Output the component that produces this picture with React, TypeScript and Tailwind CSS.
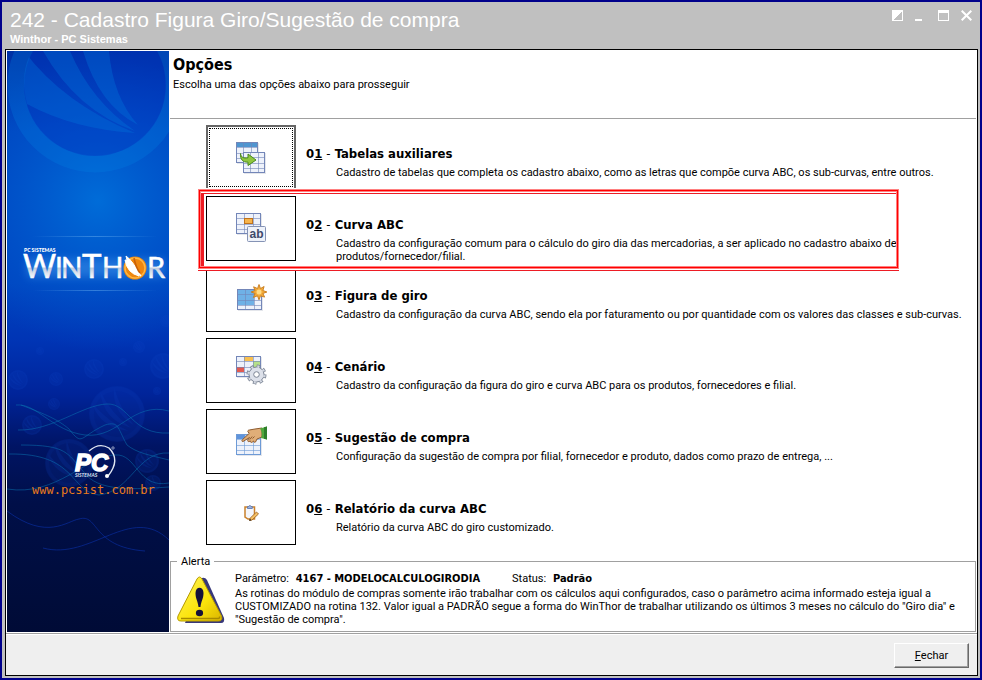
import React from 'react';

interface Option {
  code: string;
  title: string;
  text: string;
  icon: React.ReactNode;
}

interface GridProps {
  x: number;
  y: number;
  w: number;
  h: number;
  stroke?: string;
  children?: React.ReactNode;
}

// small table glyph: frame, 3 columns and 4 rows
function Grid({ x, y, w, h, stroke = '#7386b8', children }: GridProps) {
  const cols = [Math.round(w / 3), Math.round((w * 2) / 3)];
  const rows = [Math.round(h / 4), Math.round(h / 2), Math.round((h * 3) / 4)];
  return (
    <g transform={`translate(${x} ${y})`} shapeRendering="crispEdges">
      <rect x="1" y="1" width={w} height={h} fill="#c9cdd8" opacity="0.5" />
      <rect width={w} height={h} fill="#eef2fb" />
      {children}
      {cols.map((c) => <rect key={c} x={c} width="1" height={h} fill={stroke} opacity="0.6" />)}
      {rows.map((r) => <rect key={r} y={r} width={w} height="1" fill={stroke} opacity="0.6" />)}
      <rect x="0.5" y="0.5" width={w - 1} height={h - 1} fill="none" stroke={stroke} />
    </g>
  );
}

const IconTables = () => (
  <svg width="32" height="32" viewBox="0 0 32 32" aria-hidden="true">
    <Grid x={1} y={0} w={22} h={21}>
      <rect width="22" height="5" fill="#4f95d0" />
    </Grid>
    <Grid x={8} y={10} w={22} h={21} />
    <path d="M5.500 11.500c.5 4 3 5 7.500 4.300V12l8 6-8 5.500v-3.400C8 20.500 5 17.500 5.500 11.500z" fill="#8fc63f" stroke="#4b8a1d" />
  </svg>
);

const IconText = () => (
  <svg width="32" height="32" viewBox="0 0 32 32" aria-hidden="true">
    <Grid x={1} y={0} w={25} h={21} />
    <rect x="9.500" y="5.500" width="8" height="5" fill="#f6b44c" stroke="#c0731c" />
    <rect x="12.500" y="13.500" width="18" height="15" rx="1" fill="#eef2fa" stroke="#8593b5" />
    <text x="21.500" y="25" textAnchor="middle" fontFamily="Liberation Sans, sans-serif" fontWeight="700" fontSize="12" fill="#3f4a6b">ab</text>
  </svg>
);

const IconNew = () => (
  <svg width="32" height="32" viewBox="0 0 32 32" aria-hidden="true">
    <Grid x={2} y={5} w={25} h={21}>
      <rect width="17" height="16" fill="#6fb1e6" />
    </Grid>
    <path d="M24 .5l1.500 4 3.600-2-1.200 4 4 1.500-4 1.500 1.700 3.600-4.100-1.300-1.500 4-1.500-4-4.100 1.600 1.700-3.900-3.900-1.500 3.900-1.500-1.500-3.700 3.900 1.700z" fill="#f3ab3c" stroke="#c67a1b" strokeWidth=".9" />
    <circle cx="24" cy="8" r="2.500" fill="#ffdb84" />
  </svg>
);

const IconGear = () => (
  <svg width="32" height="32" viewBox="0 0 32 32" aria-hidden="true">
    <Grid x={1} y={1} w={25} h={21}>
      <rect x="8" y="0" width="9" height="5" fill="#f8c050" />
      <rect x="0" y="11" width="8" height="5" fill="#e25a50" />
      <rect x="17" y="5" width="8" height="6" fill="#b5e08a" />
    </Grid>
    <circle cx="21.500" cy="19.500" r="8" fill="none" stroke="#7b8494" strokeWidth="4" strokeDasharray="3.300 2.983" />
    <circle cx="21.500" cy="19.500" r="7.500" fill="#dde1ea" stroke="#7b8494" />
    <circle cx="21.500" cy="19.500" r="8" fill="none" stroke="#d3d8e2" strokeWidth="2.400" strokeDasharray="2 4.283" strokeDashoffset="-.6" />
    <circle cx="21.500" cy="19.500" r="2.800" fill="#fff" stroke="#7b8494" />
  </svg>
);

const IconHand = () => (
  <svg width="32" height="32" viewBox="0 0 32 32" aria-hidden="true">
    <Grid x={1} y={8} w={25} h={21} stroke="#6d9ad6">
      <rect width="25" height="5" fill="#a9c9f0" />
      <rect width="9" height="5" fill="#5f94dc" />
    </Grid>
    <path d="M8 15.500c-1 .4-1.500-1-.7-1.700l7-6.500L13 6c-.6-1 .2-2 1.300-2L20 3l7-1v9l-5 2-1.500 3c-1 .8-2 0-1.800-1l-1.700 1.300c-1 .4-1.800-.3-1.500-1.300l-1.800.6c-1 0-1.300-1-.7-1.900l1.500-2.200z" fill="#e0ae78" stroke="#8f5c30" />
    <path d="M17.500 12.500l2-2M14.800 13.500l2.400-3" stroke="#8f5c30" fill="none" />
    <path d="M25 2.500L32 .5v13l-6-1.500c1.500-3 1-6-1-9.500z" fill="#4fa83d" />
    <path d="M29 1.300l3-.8v13l-3-.7z" fill="#2e7f2b" />
  </svg>
);

const IconClipboard = () => (
  <svg width="16" height="16" viewBox="0 0 16 16" aria-hidden="true">
    <path d="M2 2h9.500v12H5L2 12z" fill="#f4f6fb" stroke="#c9812c" strokeWidth="1.500" />
    <path d="M4.500 3.500V1.500h1.200c.4-1.300 2-1.300 2.400 0h1.200v2z" fill="#9eb4df" stroke="#5672ad" strokeWidth=".8" />
    <path d="M13.500 7l2 2-6.500 6-2.500.7.6-2.500z" fill="#f6c063" stroke="#94591b" strokeWidth=".8" />
    <path d="M6.300 15.800l.6-2 1.500 1.500z" fill="#222" />
  </svg>
);

const IconWarning = () => (
  <svg width="48" height="48" viewBox="0 0 48 48" className="shrink-0" role="img" aria-label="Alerta">
    <defs>
      <linearGradient id="warn" x1="0" y1="0" x2="1" y2="1">
        <stop offset="0" stopColor="#fff45a" />
        <stop offset=".6" stopColor="#fbe30a" />
        <stop offset="1" stopColor="#d9b400" />
      </linearGradient>
    </defs>
    <path d="M25 3q3-1 5 2l17 38q1 5-3 5H8z" fill="#38387a" />
    <path d="M20 4q2.500-4 5 0l19.500 37q1.500 5-3 5H4q-4.500 0-3-5z" fill="url(#warn)" stroke="#b59a00" />
    <path d="M4 43.500h37q2 0 1.500-2" stroke="#a88a00" strokeWidth="1.500" fill="none" />
    <path d="M18.500 18c0-7 8-7 8 0 0 6-2.500 8-3 14h-2c-.5-6-3-8-3-14z" fill="#15103a" />
    <ellipse cx="22.500" cy="38" rx="3.600" ry="3.200" fill="#15103a" />
  </svg>
);

// round ball with three blades, repeated over the side panel
const Ball = ({ x, y, r }: { x: number; y: number; r: number }) => (
  <g transform={`translate(${x} ${y}) scale(${r / 10})`} fill="#1048c8" opacity="0.26">
    <circle r="10" fillOpacity="0.5" />
    <path d="M-9-4Q-3 3 4 6-6 5-9-4zM-6-8Q-2 0 5 5-5 2-6-8zM-1-9.500Q1-2 6 4-2-1-1-9.500z" />
    <circle r="9" fill="none" stroke="#1048c8" strokeWidth="1.500" strokeOpacity=".5" />
  </g>
);

const SidePanel = () => (
  <svg width="162" height="581" viewBox="0 0 162 581" className="block" fontFamily="Lato, sans-serif">
    <defs>
      <linearGradient id="sky" x1="0" y1="0" x2="0" y2="1">
        <stop offset="0" stopColor="#0030a4" />
        <stop offset=".14" stopColor="#0044c0" />
        <stop offset=".4" stopColor="#0044c0" />
        <stop offset=".5" stopColor="#0034b4" />
        <stop offset=".59" stopColor="#00249a" />
        <stop offset=".68" stopColor="#001464" />
        <stop offset=".78" stopColor="#000f48" />
        <stop offset="1" stopColor="#000b36" />
      </linearGradient>
      <radialGradient id="glow" gradientUnits="userSpaceOnUse" cx="91" cy="150" r="150">
        <stop offset="0" stopColor="#006cd8" />
        <stop offset="1" stopColor="#005cd0" stopOpacity="0" />
      </radialGradient>
      <linearGradient id="rule">
        <stop offset="0" stopColor="#6ab0f0" stopOpacity="0" />
        <stop offset=".5" stopColor="#6ab0f0" stopOpacity=".8" />
        <stop offset="1" stopColor="#6ab0f0" stopOpacity="0" />
      </linearGradient>
      <linearGradient id="steel" gradientUnits="userSpaceOnUse" x1="0" y1="203" x2="0" y2="228">
        <stop offset=".5" stopColor="#fff" />
        <stop offset=".58" stopColor="#c4cfe0" />
        <stop offset="1" stopColor="#fff" />
      </linearGradient>
      <filter id="halo" x="-20%" y="-50%" width="140%" height="200%">
        <feGaussianBlur stdDeviation="4" />
      </filter>
    </defs>
    <rect width="162" height="581" fill="url(#sky)" />
    <rect width="162" height="340" fill="url(#glow)" />

    <circle cx="88" cy="34" r="79" fill="none" stroke="#0080e4" strokeOpacity=".28" strokeWidth="17" />
    <circle cx="88" cy="34" r="71" fill="#0034c0" fillOpacity=".4" />
    <g fill="#0074dc" fillOpacity=".36">
      <path d="M17 0Q56 52 128 82 66 78 20 53L22 60Q12 28 22 6z" />
      <path d="M36 0h27Q84 50 128 80 70 60 36 0z" />
      <path d="M76 0h26Q106 46 131 74 92 54 76 0z" />
    </g>

    <rect x="26" y="185" width="124" height="1" fill="url(#rule)" opacity=".6" />
    <rect x="26" y="239" width="124" height="1" fill="url(#rule)" opacity=".6" />
    <rect x="20" y="208" width="138" height="18" fill="#4a9cf0" opacity=".45" filter="url(#halo)" />
    <text x="17" y="201" fontSize="5" fontWeight="900" fill="#fff">PC SISTEMAS</text>
    <text y="227" fill="url(#steel)" stroke="url(#steel)" strokeWidth=".5">
      <tspan x="16" fontSize="32">W</tspan>
      <tspan x="48" fontSize="28">I</tspan>
      <tspan x="54" fontSize="28">N</tspan>
      <tspan x="75" fontSize="33">T</tspan>
      <tspan x="95" fontSize="28">H</tspan>
      <tspan x="140" fontSize="29">R</tspan>
    </text>
    <circle cx="128" cy="217" r="11.500" fill="#ee860e" />
    <circle cx="128" cy="217" r="10" fill="none" stroke="#ffb640" strokeWidth="1.500" />
    <path d="M122 210q3 11 10 15-12-3-14-16zM119 205q6 4 15 20-13-5-15-20z" fill="#fff" stroke="#fff" />
    <path d="M127 207q2 10 6 15" fill="none" stroke="#c75f08" strokeWidth="1.500" />

    <Ball x={33} y={300} r={4} />
    <Ball x={132} y={296} r={6} />
    <Ball x={159} y={270} r={6} />
    <Ball x={87} y={318} r={10} />
    <Ball x={49} y={328} r={7} />
    <Ball x={116} y={311} r={4} />
    <Ball x={156} y={315} r={13} />
    <Ball x={11} y={329} r={10} />
    <Ball x={47} y={353} r={6} />
    <Ball x={150} y={340} r={4} />
    <Ball x={110} y={363} r={28} />
    <Ball x={25} y={374} r={10} />
    <Ball x={62} y={412} r={24} />
    <Ball x={140} y={410} r={12} />
    <Ball x={146} y={432} r={8} />

    <g fill="none" stroke="#0a78b4" strokeOpacity=".5">
      <path d="M9 354C30 352 45 380 78 384 112 388 125 350 162 360" />
      <path d="M11 379C45 380 75 354 100 353 122 352 124 384 162 382" />
      <path d="M14 354C40 364 50 368 62 378 76 396 72 386 98 374 112 370 110 376 120 394 130 402 142 404 162 409" />
      <path d="M14 394C60 394 60 402 76 420 90 442 130 438 162 436" />
      <path d="M2 403C70 402 62 440 92 444 125 440 130 400 162 402" />
      <path d="M0 438C50 446 80 404 108 404 130 402 130 438 162 432" />
    </g>
    <g fill="none" stroke="#0a30a8" strokeOpacity=".6">
      <path d="M0 460C40 490 60 470 72 468 92 462 84 496 138 500" />
      <path d="M36 497C84 510 124 452 162 489" />
    </g>

    <path d="M82 400q10-9 20-3 12 12-1 28" fill="none" stroke="#dfe6f2" strokeWidth="1.400" />
    <text x="68" y="420" fontFamily="Liberation Sans, sans-serif" fontSize="24" fontWeight="700" fontStyle="italic" fill="#fff" stroke="#fff" strokeWidth="1.400">PC</text>
    <text x="68" y="426" fontSize="5" fontWeight="700" fontStyle="italic" fill="#dfe6f2">SISTEMAS</text>
    <circle cx="100" cy="425" r="2" fill="#fff" />
    <circle cx="106" cy="397" r="1.200" fill="none" stroke="#dfe6f2" strokeWidth=".6" />
    <a href="http://www.pcsist.com.br">
      <text x="25" y="443" fontFamily="DejaVu Sans Mono, monospace" fontSize="12" fill="#e87a1c">www.pcsist.com.br</text>
    </a>
  </svg>
);

const options: Option[] = [
  {
    code: '1',
    title: 'Tabelas auxiliares',
    text: 'Cadastro de tabelas que completa os cadastro abaixo, como as letras que compõe curva ABC, os sub-curvas, entre outros.',
    icon: <IconTables />,
  },
  {
    code: '2',
    title: 'Curva ABC',
    text: 'Cadastro da configuração comum para o cálculo do giro dia das mercadorias, a ser aplicado no cadastro abaixo de produtos/fornecedor/filial.',
    icon: <IconText />,
  },
  {
    code: '3',
    title: 'Figura de giro',
    text: 'Cadastro da configuração da curva ABC, sendo ela por faturamento ou por quantidade com os valores das classes e sub-curvas.',
    icon: <IconNew />,
  },
  {
    code: '4',
    title: 'Cenário',
    text: 'Cadastro da configuração da figura do giro e curva ABC para os produtos, fornecedores e filial.',
    icon: <IconGear />,
  },
  {
    code: '5',
    title: 'Sugestão de compra',
    text: 'Configuração da sugestão de compra por filial, fornecedor e produto, dados como prazo de entrega, ...',
    icon: <IconHand />,
  },
  {
    code: '6',
    title: 'Relatório da curva ABC',
    text: 'Relatório da curva ABC do giro customizado.',
    icon: <IconClipboard />,
  },
];

function OptionRow({ option, focused, marked }: { option: Option; focused: boolean; marked: boolean }) {
  const id = `opcao-${option.code}`;
  return (
    <li className="relative flex h-[65px] gap-[10px]">
      <button
        type="button"
        aria-labelledby={id}
        className={
          focused
            ? 'flex h-full w-[90px] shrink-0 border-2 border-[#666666] bg-white p-px'
            : 'flex h-full w-[90px] shrink-0 border border-black bg-white p-[2px]'
        }
      >
        <span
          className={
            focused
              ? 'flex h-full w-full items-center justify-center border border-dotted border-black'
              : 'flex h-full w-full items-center justify-center'
          }
        >
          {option.icon}
        </span>
      </button>
      <div className="min-w-0 flex-1 pt-[21px]">
        <h2 id={id} className="font-['DejaVu_Sans_Condensed',sans-serif] text-[13px] leading-4 font-bold">
          0<u>{option.code}</u> <span className="font-normal">-</span> {option.title}
        </h2>
        <p className="mt-1 pl-[30px] text-[11px] leading-[13px]">
          {marked ? <span className="block max-w-[580px]">{option.text}</span> : option.text}
        </p>
      </div>
      {marked && (
        <div className="pointer-events-none absolute -top-[7px] -left-2 z-10 w-[701px] border-b border-[#ed1c24] pb-px">
          <div className="border border-[#ff8080] shadow-[0_0_0_1px_#ffffff]">
            <div className="border border-[#ff0000]">
              <div className="border border-[#ff8080] pt-px">
                <div className="h-[73px] border-t border-l-[3px] border-[#ed1c24]" />
              </div>
            </div>
          </div>
        </div>
      )}
    </li>
  );
}

export default function App() {
  return (
    <div className="flex min-h-screen flex-col border-2 border-[#00008b] bg-[#c0c0c0] pr-[2px] pb-[2px] pl-[3px] font-['Roboto',sans-serif] text-black">
      <header className="flex h-[47px] justify-between pt-[6px] pr-[6px] pl-[5px] font-['Liberation_Sans',sans-serif] text-white">
        <div>
          <h1 className="text-[21px] leading-6">242 - Cadastro Figura Giro/Sugestão de compra</h1>
          <p className="text-[11px] leading-[14px] font-bold">Winthor - PC Sistemas</p>
        </div>
        <div className="flex h-[15px] items-center gap-3">
          <button type="button" aria-label="Alternar">
            <svg width="11" height="11" viewBox="0 0 11 11" shapeRendering="crispEdges">
              <path d="M0 0h11L0 11z" fill="#fff" />
              <path d="M.5.5h10v10H.5z" fill="none" stroke="#fff" />
            </svg>
          </button>
          <button type="button" aria-label="Minimizar">
            <svg width="11" height="11" viewBox="0 0 11 11" shapeRendering="crispEdges">
              <path d="M0 9h7v2H0z" fill="#fff" />
            </svg>
          </button>
          <button type="button" aria-label="Maximizar">
            <svg width="11" height="11" viewBox="0 0 11 11" shapeRendering="crispEdges">
              <path d="M.5.5h10v10H.5z" fill="none" stroke="#fff" />
              <path d="M0 0h11v3H0z" fill="#fff" />
            </svg>
          </button>
          <button type="button" aria-label="Fechar janela">
            <svg width="11" height="11" viewBox="0 0 11 11">
              <path d="M.7.7l9.600 9.600M10.300.7L.7 10.300" stroke="#fff" strokeWidth="2" />
            </svg>
          </button>
        </div>
      </header>

      <div className="flex flex-1 flex-col border border-black bg-white">
        <div className="flex flex-1 gap-px p-px">
          <aside className="w-[162px] shrink-0 bg-[#000b36]">
            <SidePanel />
          </aside>
          <main className="flex min-w-0 flex-1 flex-col">
            <div className="h-[68px] border-b border-[#a0a0a0] px-[3px] pt-[5px]">
              <h2 className="font-['DejaVu_Sans_Condensed',sans-serif] text-base leading-[18px] font-bold">Opções</h2>
              <p className="mt-1 text-[11px] leading-[13px]">Escolha uma das opções abaixo para prosseguir</p>
            </div>
            <ul className="flex flex-col gap-[6px] pt-[6px] pl-9">
              {options.map((option, i) => (
                <OptionRow key={option.code} option={option} focused={i === 0} marked={i === 1} />
              ))}
            </ul>
            <fieldset className="mt-auto border border-[#a0a0a0] pr-4 pb-[5px] pl-[6px] text-[11px] leading-[13px]">
              <legend className="px-1">Alerta</legend>
              <div className="flex gap-[10px]">
                <div className="pt-[7px]">
                  <IconWarning />
                </div>
                <div className="pt-1">
                  <div className="flex gap-8">
                    <p>Parâmetro: <b className="pl-1 font-['DejaVu_Sans_Condensed',sans-serif]">4167 - MODELOCALCULOGIRODIA</b></p>
                    <p>Status: <b className="pl-1 font-['DejaVu_Sans_Condensed',sans-serif]">Padrão</b></p>
                  </div>
                  <p className="mt-[2px]">
                    As rotinas do módulo de compras somente irão trabalhar com os cálculos aqui configurados, caso o parâmetro acima informado esteja igual a CUSTOMIZADO na rotina 132. Valor igual a PADRÃO segue a forma do WinThor de trabalhar utilizando os últimos 3 meses no cálculo do "Giro dia" e "Sugestão de compra".
                  </p>
                </div>
              </div>
            </fieldset>
          </main>
        </div>
        <footer className="flex h-[42px] justify-end border-t border-[#a0a0a0] bg-[#efefef] pt-[9px] pr-2 shadow-[inset_0_1px_0_#ffffff]">
          <button
            type="button"
            className="h-[25px] w-[75px] border border-t-white border-r-[#696969] border-b-[#696969] border-l-white pt-[2px] text-[11px] shadow-[inset_-1px_-1px_0_#a0a0a0]"
          >
            <u>F</u>echar
          </button>
        </footer>
      </div>
    </div>
  );
}
